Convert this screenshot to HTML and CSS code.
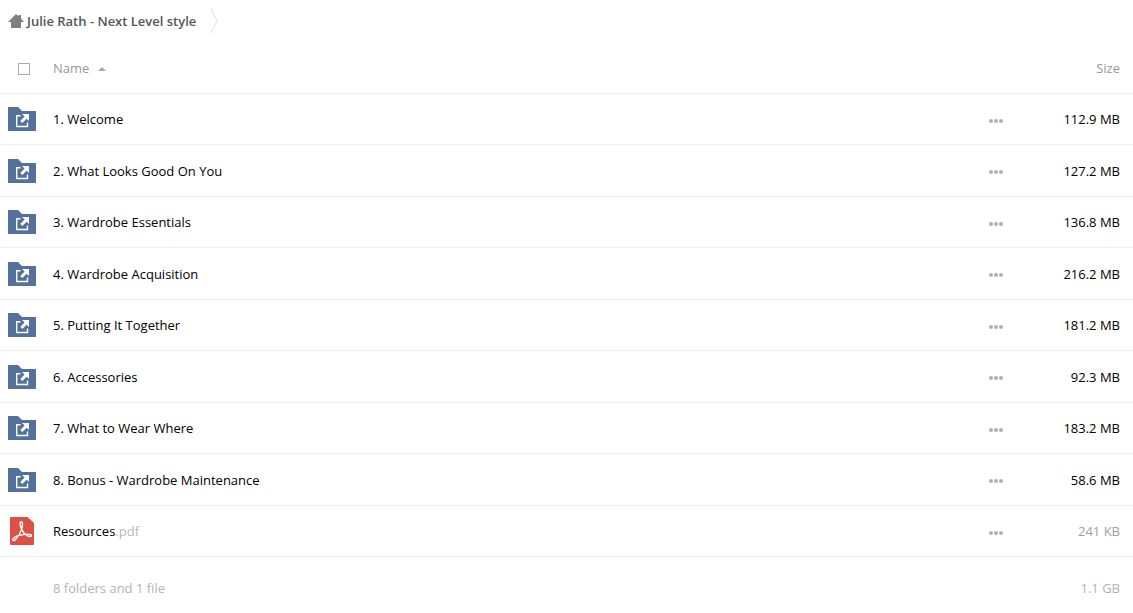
FILE: index.html
```html
<!DOCTYPE html>
<html lang="en">
<head>
    <meta charset="UTF-8">
    <meta name="viewport" content="width=device-width, initial-scale=1.0">
    <title>Julie Rath - Next Level style</title>
    <link rel="stylesheet" href="styles.css">
</head>
<body>
    <!-- Shared icons -->
    <svg class="icon-defs" aria-hidden="true">
        <symbol id="icon-folder" viewBox="0 0 28 24">
            <path fill="#54719c" d="M0 0h10l4 4h13.500q.5 0 .5.5V24H0z"/>
            <path fill="none" stroke="#fff" stroke-width="1.4" d="M12.500 8.700H8.700v10.800h10.800V15.500"/>
            <path fill="#fff" d="M14 7h7v7l-2.300-2.300-4.400 4.300-2-2 4.300-4.400z"/>
        </symbol>
        <symbol id="icon-more" viewBox="0 0 14 4">
            <circle cx="2" cy="2" r="2"/>
            <circle cx="7" cy="2" r="2"/>
            <circle cx="12" cy="2" r="2"/>
        </symbol>
    </svg>

    <nav class="breadcrumb">
        <a href="#" class="crumb">
            <svg class="icon-home" viewBox="0 0 16 14" aria-hidden="true">
                <path d="M8 0l2.500 2.200V1h2.500v3.600L16 8h-3v6H3V8H0z"/>
            </svg>
            <span>Julie Rath - Next Level style</span>
        </a>
        <svg class="crumb-arrow" viewBox="0 0 8 26" aria-hidden="true">
            <path d="M1 1l6 12-6 12"/>
        </svg>
    </nav>

    <table class="files">
        <thead>
            <tr>
                <th class="col-icon"><input type="checkbox" class="select-all" aria-label="Select all"></th>
                <th class="col-name"><button type="button" class="sort">Name <span class="sort-arrow"></span></button></th>
                <th class="col-actions"></th>
                <th class="col-size"><button type="button" class="sort">Size</button></th>
            </tr>
        </thead>
        <tbody>
            <tr>
                <td class="col-icon"><svg class="icon-folder"><use href="#icon-folder"/></svg></td>
                <td class="col-name"><a href="#">1. Welcome</a></td>
                <td class="col-actions"><button type="button" class="more" aria-label="Actions"><svg><use href="#icon-more"/></svg></button></td>
                <td class="col-size">112.9 MB</td>
            </tr>
            <tr>
                <td class="col-icon"><svg class="icon-folder"><use href="#icon-folder"/></svg></td>
                <td class="col-name"><a href="#">2. What Looks Good On You</a></td>
                <td class="col-actions"><button type="button" class="more" aria-label="Actions"><svg><use href="#icon-more"/></svg></button></td>
                <td class="col-size">127.2 MB</td>
            </tr>
            <tr>
                <td class="col-icon"><svg class="icon-folder"><use href="#icon-folder"/></svg></td>
                <td class="col-name"><a href="#">3. Wardrobe Essentials</a></td>
                <td class="col-actions"><button type="button" class="more" aria-label="Actions"><svg><use href="#icon-more"/></svg></button></td>
                <td class="col-size">136.8 MB</td>
            </tr>
            <tr>
                <td class="col-icon"><svg class="icon-folder"><use href="#icon-folder"/></svg></td>
                <td class="col-name"><a href="#">4. Wardrobe Acquisition</a></td>
                <td class="col-actions"><button type="button" class="more" aria-label="Actions"><svg><use href="#icon-more"/></svg></button></td>
                <td class="col-size">216.2 MB</td>
            </tr>
            <tr>
                <td class="col-icon"><svg class="icon-folder"><use href="#icon-folder"/></svg></td>
                <td class="col-name"><a href="#">5. Putting It Together</a></td>
                <td class="col-actions"><button type="button" class="more" aria-label="Actions"><svg><use href="#icon-more"/></svg></button></td>
                <td class="col-size">181.2 MB</td>
            </tr>
            <tr>
                <td class="col-icon"><svg class="icon-folder"><use href="#icon-folder"/></svg></td>
                <td class="col-name"><a href="#">6. Accessories</a></td>
                <td class="col-actions"><button type="button" class="more" aria-label="Actions"><svg><use href="#icon-more"/></svg></button></td>
                <td class="col-size">92.3 MB</td>
            </tr>
            <tr>
                <td class="col-icon"><svg class="icon-folder"><use href="#icon-folder"/></svg></td>
                <td class="col-name"><a href="#">7. What to Wear Where</a></td>
                <td class="col-actions"><button type="button" class="more" aria-label="Actions"><svg><use href="#icon-more"/></svg></button></td>
                <td class="col-size">183.2 MB</td>
            </tr>
            <tr>
                <td class="col-icon"><svg class="icon-folder"><use href="#icon-folder"/></svg></td>
                <td class="col-name"><a href="#">8. Bonus - Wardrobe Maintenance</a></td>
                <td class="col-actions"><button type="button" class="more" aria-label="Actions"><svg><use href="#icon-more"/></svg></button></td>
                <td class="col-size">58.6 MB</td>
            </tr>
            <tr>
                <td class="col-icon">
                    <svg class="icon-pdf" viewBox="0 0 24 28">
                        <path fill="#dc5047" d="M1 0h16.500L24 6v21q0 1-1 1H1q-1 0-1-1V1q0-1 1-1z"/>
                        <path fill="none" stroke="#fff" stroke-width="1.400" stroke-linejoin="round" d="M11 4.800c1.700-.5 1.800 2.200 1 5.700-1 4.200-4.300 10.200-7.200 12.600-1.400 1.100-2.700.300-2-1 1.200-2.200 6-3.900 10.400-4.500 4-.500 8-.500 8.200.900.200 1.600-2.900 1.300-5.300-.5C13.200 15.800 11 11.500 10.300 8.500 9.900 6.500 10 5.100 11 4.800z"/>
                    </svg>
                </td>
                <td class="col-name"><a href="#">Resources<span class="extension">.pdf</span></a></td>
                <td class="col-actions"><button type="button" class="more" aria-label="Actions"><svg><use href="#icon-more"/></svg></button></td>
                <td class="col-size small">241 KB</td>
            </tr>
        </tbody>
        <tfoot>
            <tr>
                <td class="col-icon"></td>
                <td class="col-name">8 folders and 1 file</td>
                <td class="col-actions"></td>
                <td class="col-size">1.1 GB</td>
            </tr>
        </tfoot>
    </table>
</body>
</html>
```

FILE: styles.css
```css
* {
    margin: 0;
    padding: 0;
    box-sizing: border-box;
}

body {
    background-color: #fff;
    color: #000;
    font-family: 'Open Sans', 'Liberation Sans', sans-serif;
    font-size: 13px;
    line-height: 20px;
}

a {
    color: inherit;
    text-decoration: none;
}

button {
    background: none;
    border: none;
    color: inherit;
    font: inherit;
    cursor: pointer;
}

svg {
    display: block;
}

.icon-defs {
    position: absolute;
    width: 0;
    height: 0;
}

/* Breadcrumb */
.breadcrumb {
    display: flex;
    align-items: center;
    gap: 14px;
    height: 44px;
    padding: 0 8px 2px;
}

.crumb {
    display: flex;
    align-items: center;
    gap: 3px;
    color: #555;
    font-weight: 600;
}

.icon-home {
    width: 16px;
    height: 14px;
    fill: #808080;
}

.crumb-arrow {
    width: 8px;
    height: 26px;
    fill: none;
    stroke: #ddd;
}

/* File list */
.files {
    width: 100%;
    table-layout: fixed;
    border-collapse: separate;
    border-spacing: 0;
}

.files th,
.files td {
    font-weight: 400;
    text-align: left;
    vertical-align: middle;
    white-space: nowrap;
}

.files thead th {
    height: 50px;
    border-bottom: 1px solid #eee;
    color: #999;
}

.files tbody td {
    height: 51px;
    border-bottom: 1px solid #eee;
}

.files tbody tr:nth-child(even) td {
    height: 52px;
}

.files tbody tr:hover {
    background-color: #f8f8f8;
}

.files tfoot td {
    height: 56px;
    padding-top: 6px;
    color: #b3b3b3;
}

.files .col-icon {
    width: 53px;
    padding-left: 8px;
}

.files .col-actions {
    width: 60px;
}

.files .col-size {
    width: 100px;
    padding-right: 13px;
    text-align: right;
}

.files .small {
    color: #a0a0a0;
}

.extension {
    color: #b8b8b8;
}

.select-all {
    display: block;
    appearance: none;
    width: 12px;
    height: 12px;
    margin-left: 10px;
    border: 1px solid #aaa;
    background-color: #fff;
}

.select-all:checked {
    background-color: #54719c;
}

.sort {
    padding-bottom: 2px;
}

.sort-arrow {
    display: inline-block;
    margin-left: 5px;
    border: 4px solid transparent;
    border-top: none;
    border-bottom-color: #aaa;
    vertical-align: middle;
}

.icon-folder {
    width: 28px;
    height: 24px;
}

.icon-pdf {
    width: 24px;
    height: 28px;
    margin-left: 2px;
}

.more {
    display: block;
    padding: 11px 16px 8px;
}

.more svg {
    width: 14px;
    height: 4px;
    fill: #b0b0b0;
}
```
